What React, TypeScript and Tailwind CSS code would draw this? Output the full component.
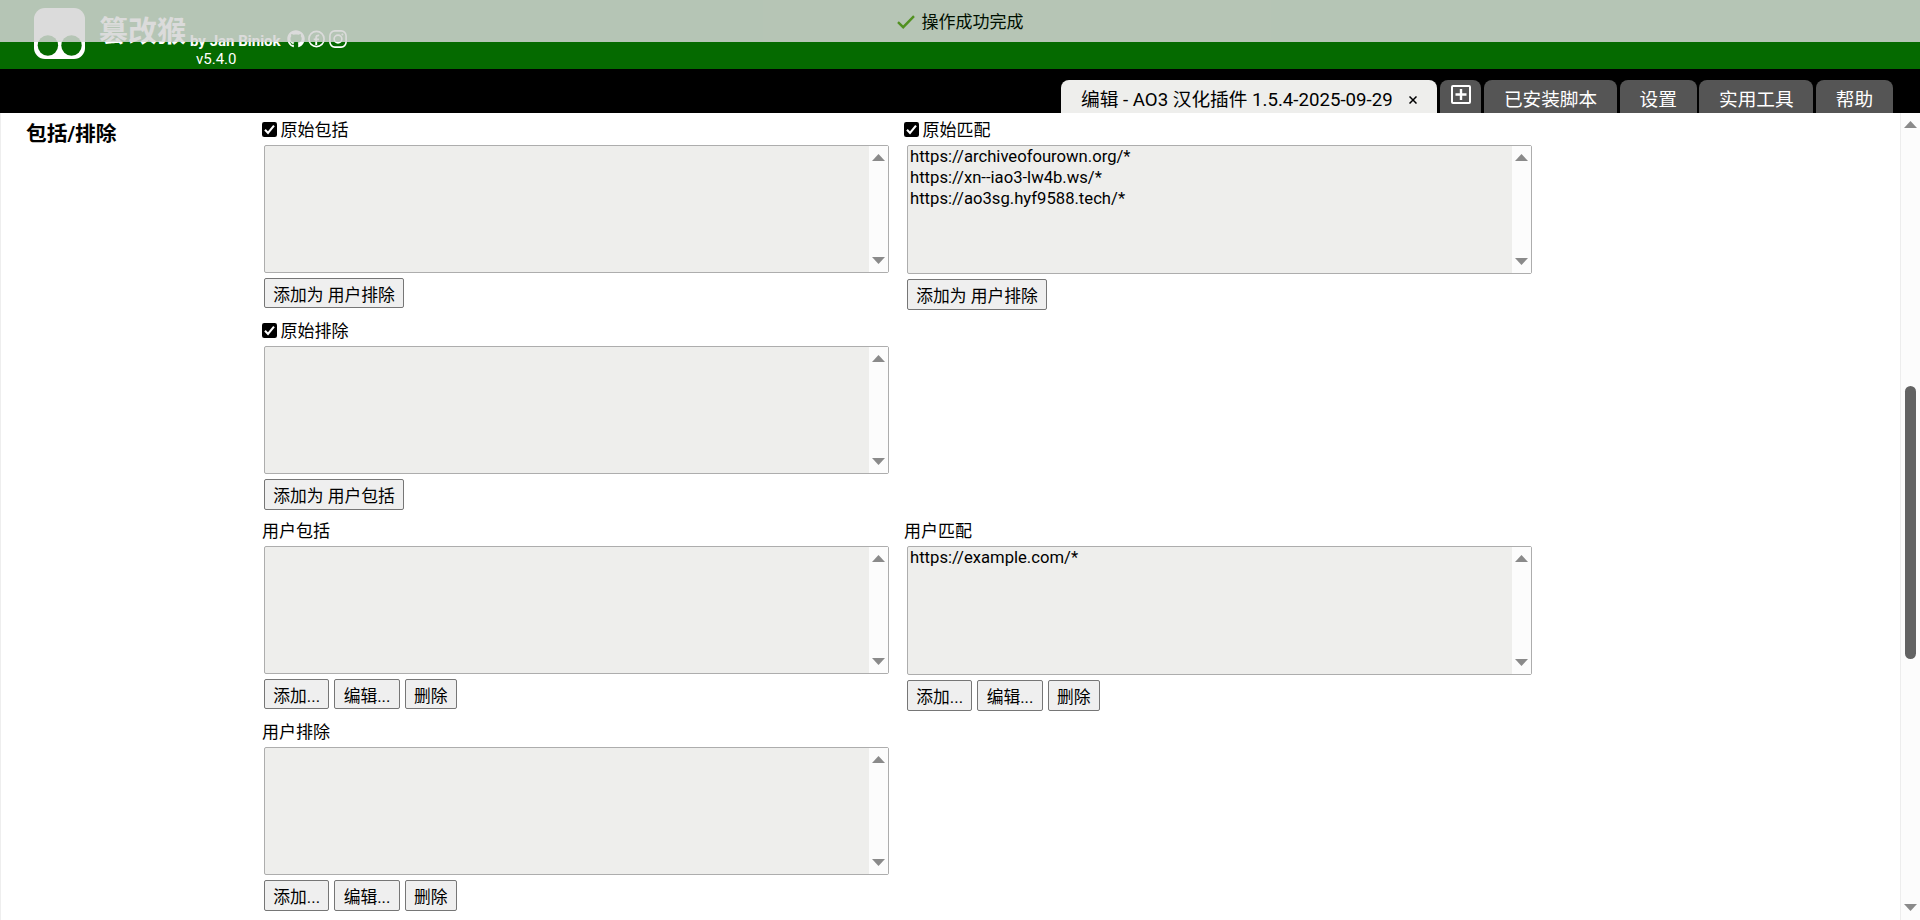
import React from "react";
import { FaGithub } from "react-icons/fa";

function Arrow({ down = false }: { down?: boolean }) {
  return (
    <svg width="13" height="7" viewBox="0 0 13 7" className="block shrink-0" fill="#8a8a8a">
      <path d={down ? "M0 0H13L6.5 7Z" : "M0 7H13L6.5 0Z"} />
    </svg>
  );
}

function Checkbox() {
  return (
    <svg width="15" height="15" viewBox="0 0 15 15" className="-mt-[2px] mr-[3.5px] block shrink-0">
      <rect width="15" height="15" rx="2.2" fill="#000" />
      <path d="M3 7.8L6 10.9L12 3.6" fill="none" stroke="#fff" strokeWidth="2.1" />
    </svg>
  );
}

interface ListProps {
  title: string;
  checked?: boolean;
  items?: string[];
  actions: string[];
  tall?: boolean;
  tallButtons?: boolean;
}

function RuleList({ title, checked, items = [], actions, tall, tallButtons }: ListProps) {
  return (
    <section className="flex w-[642px] flex-col">
      <div className="flex h-8 items-center pt-0.5 text-[17px] leading-5">
        {checked && <Checkbox />}
        <span>{title}</span>
      </div>
      <div
        className={`flex w-[625px] rounded-[2px] border border-[#adadad] bg-[#eeeeec] ${
          tall ? "ml-[3px] h-[129px]" : "ml-[2px] h-[128px]"
        }`}
      >
        <div className="flex-1 pl-[2px] text-[16.65px] leading-[21px]">
          {items.map((item) => (
            <div key={item}>{item}</div>
          ))}
        </div>
        <div className="flex w-[19px] flex-col items-center justify-between bg-[#fcfcfc] py-2">
          <Arrow />
          <Arrow down />
        </div>
      </div>
      <div className={`mt-[5px] flex gap-[5px] ${tall ? "ml-[3px]" : "ml-[2px]"}`}>
        {actions.map((action) => (
          <button
            key={action}
            className={`rounded-[2px] border border-[#767676] bg-[#efefef] px-[8.3px] text-[16.75px] leading-7 whitespace-nowrap ${
              tall || tallButtons ? "h-[31px] pt-[2px]" : "h-[30px] pt-[2px]"
            }`}
          >
            {action}
          </button>
        ))}
      </div>
    </section>
  );
}

function Tab({ label, width }: { label: string; width: string }) {
  return (
    <div className={`flex h-[33px] items-center justify-center rounded-t-[8px] bg-[#555] pt-[7px] text-[18.67px] leading-6 text-white ${width}`}>
      {label}
    </div>
  );
}

const edits = ["添加...", "编辑...", "删除"];

export default function App() {
  return (
    <div className="relative flex h-[920px] w-[1920px] flex-col overflow-hidden bg-white font-[Roboto,'Noto_Sans_CJK_SC',sans-serif] text-black">
      <header className="flex h-[69px] shrink-0 bg-[#056a00] text-white">
        <svg width="51" height="51" viewBox="0 0 51 51" className="mt-2 ml-[34px] block shrink-0">
          <rect width="51" height="51" rx="11" fill="#fff" />
          <circle cx="13.9" cy="37.5" r="10.2" fill="#056a00" />
          <circle cx="37.5" cy="37.5" r="10.2" fill="#056a00" />
        </svg>
        <div className="mt-[11px] ml-[14px] text-[29px] leading-[42px] font-bold">篡改猴</div>
        <div className="ml-1 flex flex-col pt-[32px]">
          <div className="flex items-center">
            <span className="w-[90px] text-[15px] leading-[18px] font-bold whitespace-nowrap">by Jan Biniok</span>
            <div className="-mt-1 ml-[7px] flex gap-[3px]">
              <FaGithub size={18} />
              <svg width="17" height="18" viewBox="0 0 17 18" fill="none" stroke="#fff" strokeWidth="1.6">
                <circle cx="8.5" cy="9" r="7.6" />
                <path d="M8.2 15V7.6Q8.2 5.2 11.2 5.4M5.7 9.4H11" strokeWidth="1.9" />
              </svg>
              <svg width="18" height="18" viewBox="0 0 18 18" fill="none" stroke="#fff" strokeWidth="1.6" className="ml-px">
                <rect x="0.9" y="0.9" width="16.2" height="16.2" rx="5" />
                <circle cx="9" cy="9" r="3.9" />
                <circle cx="13.4" cy="4.6" r="0.4" strokeWidth="1.2" />
              </svg>
            </div>
          </div>
          <span className="ml-[6px] text-[15px] leading-[18px]">v5.4.0</span>
        </div>
      </header>

      <nav className="flex h-11 shrink-0 items-end justify-end gap-[2.67px] bg-black pr-[27px]">
        <div className="flex h-[33px] w-[376px] items-center rounded-t-[8px] bg-[#eeeeec] pt-[7px] pl-5 text-[18.67px] leading-6">
          <span className="w-[312px] whitespace-nowrap">编辑 - AO3 汉化插件 1.5.4-2025-09-29</span>
          <svg width="8" height="8" viewBox="0 0 8 8" className="ml-4" stroke="#000" strokeWidth="1.5">
            <path d="M0.5 0.5L7.5 7.5M7.5 0.5L0.5 7.5" />
          </svg>
        </div>
        <div className="flex h-[33px] w-[41.67px] justify-center rounded-t-[8px] bg-[#555] pt-[5px]">
          <svg width="20" height="19" viewBox="0 0 20 19" fill="none" stroke="#fff" strokeWidth="2">
            <rect x="1" y="1" width="18" height="17" rx="1" />
            <path d="M10 4V15M4.5 9.5H15.5" strokeWidth="2.4" />
          </svg>
        </div>
        <Tab label="已安装脚本" width="w-[133px]" />
        <Tab label="设置" width="w-[77px]" />
        <Tab label="实用工具" width="w-[114px]" />
        <Tab label="帮助" width="w-[77px]" />
      </nav>

      <main className="flex min-h-0 flex-1 border-l border-[#eee]">
        <h2 className="w-[261px] shrink-0 pt-[7px] pl-[25px] text-[20.7px] leading-7 font-bold">包括/排除</h2>
        <div className="grid flex-1 grid-cols-[642px_642px] grid-rows-[201px_200px_201px_200px] content-start">
          <RuleList title="原始包括" checked actions={["添加为 用户排除"]} />
          <RuleList
            title="原始匹配"
            checked
            tall
            items={["https://archiveofourown.org/*", "https://xn--iao3-lw4b.ws/*", "https://ao3sg.hyf9588.tech/*"]}
            actions={["添加为 用户排除"]}
          />
          <RuleList title="原始排除" checked actions={["添加为 用户包括"]} tallButtons />
          <div />
          <RuleList title="用户包括" actions={edits} />
          <RuleList title="用户匹配" tall items={["https://example.com/*"]} actions={edits} />
          <RuleList title="用户排除" actions={edits} tallButtons />
        </div>
        <aside className="flex w-5 shrink-0 flex-col items-center border-l border-[#ededed] bg-[#fcfcfc] pt-2 pb-[9px]">
          <Arrow />
          <div className="mt-[258px] mb-auto h-[273px] w-[11px] rounded-full bg-[#636363]" />
          <Arrow down />
        </aside>
      </main>

      <div className="absolute inset-x-0 top-0 flex h-[42px] items-center justify-center gap-[7px] bg-[#d5d5d5] pt-px text-[17px] leading-5 opacity-85">
        <svg width="18" height="14" viewBox="0 0 18 14" fill="none" stroke="#5f9826" strokeWidth="2.4">
          <path d="M1 7.2L6.2 12.2L17 1.2" />
        </svg>
        <span>操作成功完成</span>
      </div>
    </div>
  );
}
